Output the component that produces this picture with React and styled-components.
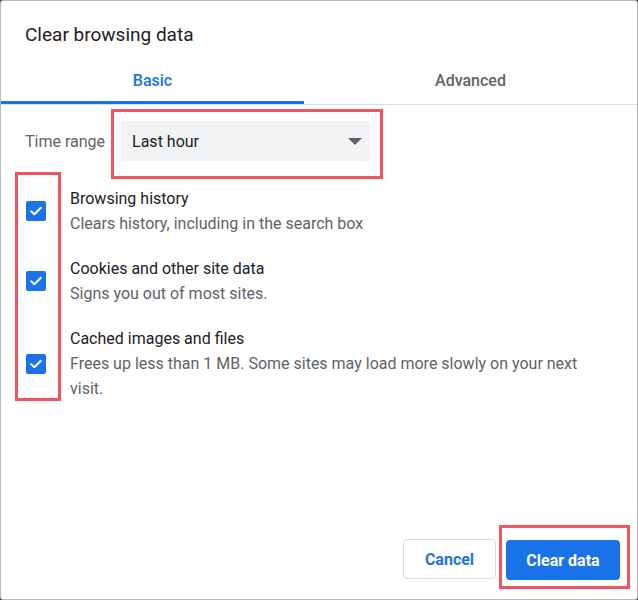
import React from "react";
import styled, { createGlobalStyle } from "styled-components";

const GlobalStyle = createGlobalStyle`
  html, body {
    margin: 0;
    padding: 0;
    background: #3a3a3a;
  }
  * {
    box-sizing: border-box;
  }
`;

const items = [
  {
    label: "Browsing history",
    desc: "Clears history, including in the search box",
  },
  {
    label: "Cookies and other site data",
    desc: "Signs you out of most sites.",
  },
  {
    label: "Cached images and files",
    desc: "Frees up less than 1 MB. Some sites may load more slowly on your next visit.",
  },
];

const CheckIcon = () => (
  <svg width="16" height="16" viewBox="0 0 16 16">
    <path d="M3.2 8.2 L6.4 11.2 L12.8 4.8" fill="none" stroke="#fff" strokeWidth="2" strokeLinecap="round" strokeLinejoin="round" />
  </svg>
);

export default function App() {
  return (
    <>
      <GlobalStyle />
      <Dialog>
        <Title>Clear browsing data</Title>

        <Tabs>
          <Tab $active>Basic</Tab>
          <Tab>Advanced</Tab>
        </Tabs>

        <RangeRow>
          <RangeLabel>Time range</RangeLabel>
          <Highlight $pad="9px 9px 15px 7px">
            <Select>
              <span>Last hour</span>
              <Arrow />
            </Select>
          </Highlight>
        </RangeRow>

        <List>
          <ColumnHighlight />
          {items.map((item, i) => (
            <React.Fragment key={item.label}>
              <Checkbox style={{ gridRow: i + 1 }}>
                <CheckIcon />
              </Checkbox>
              <ItemText style={{ gridRow: i + 1 }}>
                <Label>{item.label}</Label>
                <Desc>{item.desc}</Desc>
              </ItemText>
            </React.Fragment>
          ))}
        </List>

        <Spacer />

        <Footer>
          <CancelButton>Cancel</CancelButton>
          <Highlight $pad="12px 7px 6px 4px">
            <PrimaryButton>Clear data</PrimaryButton>
          </Highlight>
        </Footer>
      </Dialog>
    </>
  );
}

const Dialog = styled.div`
  width: 638px;
  height: 600px;
  background: #fff;
  border: 1px solid #b7bbbb;
  border-radius: 3px;
  display: flex;
  flex-direction: column;
  font-family: Roboto, "Liberation Sans", Arial, sans-serif;
  color: #202124;
`;

const Title = styled.div`
  font-size: 19px;
  line-height: 24px;
  padding: 22px 24px 0 24px;
  color: #202124;
`;

const Tabs = styled.div`
  display: flex;
  margin-top: 9px;
  border-bottom: 1px solid #dadce0;
`;

const Tab = styled.div`
  width: ${(p) => (p.$active ? "303px" : "auto")};
  flex: ${(p) => (p.$active ? "none" : "1")};
  height: 48px;
  display: flex;
  align-items: center;
  justify-content: center;
  font-size: 16px;
  font-weight: 500;
  color: ${(p) => (p.$active ? "#1a73e8" : "#5f6368")};
  border-bottom: 3px solid ${(p) => (p.$active ? "#1a73e8" : "transparent")};
  padding-top: 3px;
`;

const RangeRow = styled.div`
  display: flex;
  align-items: center;
  padding: 4px 0 0 24px;
  gap: 6px;
`;

const RangeLabel = styled.div`
  font-size: 16px;
  color: #5f6368;
  margin-top: -6px;
`;

const Highlight = styled.div`
  border: 3px solid #ee5561;
  padding: ${(p) => p.$pad};
`;

const Select = styled.div`
  width: 250px;
  height: 40px;
  background: #f1f3f4;
  border-radius: 4px;
  display: flex;
  align-items: center;
  justify-content: space-between;
  padding: 0 9px 0 11px;
  font-size: 16px;
  color: #202124;
`;

const Arrow = styled.span`
  width: 0;
  height: 0;
  border-left: 7px solid transparent;
  border-right: 7px solid transparent;
  border-top: 7px solid #5f6368;
  margin-top: 1px;
`;

const List = styled.div`
  display: grid;
  grid-template-columns: 46px 1fr;
  column-gap: 9px;
  row-gap: 20px;
  margin-top: 7px;
  padding: 0 25px 0 14px;
`;

const ColumnHighlight = styled.div`
  grid-column: 1;
  grid-row: 1 / 4;
  margin-top: -14px;
  border: 3px solid #ee5561;
`;

const Checkbox = styled.div`
  grid-column: 1;
  align-self: center;
  justify-self: start;
  margin-left: 11px;
  width: 20px;
  height: 20px;
  border-radius: 2px;
  background: #1a73e8;
  display: flex;
  align-items: center;
  justify-content: center;
`;

const ItemText = styled.div`
  grid-column: 2;
  display: flex;
  flex-direction: column;
`;

const Label = styled.div`
  font-size: 16px;
  line-height: 25px;
  color: #202124;
`;

const Desc = styled.div`
  font-size: 16px;
  line-height: 25px;
  color: #5f6368;
`;

const Spacer = styled.div`
  flex: 1;
`;

const Footer = styled.div`
  display: flex;
  justify-content: flex-end;
  align-items: flex-end;
  gap: 3px;
  padding: 0 7px 10px 0;
`;

const BaseButton = styled.button`
  height: 40px;
  border-radius: 4px;
  font-family: Roboto, "Liberation Sans", Arial, sans-serif;
  font-size: 16px;
  font-weight: 700;
  cursor: pointer;
`;

const CancelButton = styled(BaseButton)`
  width: 93px;
  background: #fff;
  color: #1a73e8;
  border: 1px solid #dadce0;
  margin-bottom: 10px;
`;

const PrimaryButton = styled(BaseButton)`
  width: 114px;
  background: #1a73e8;
  color: #fff;
  border: none;
`;
